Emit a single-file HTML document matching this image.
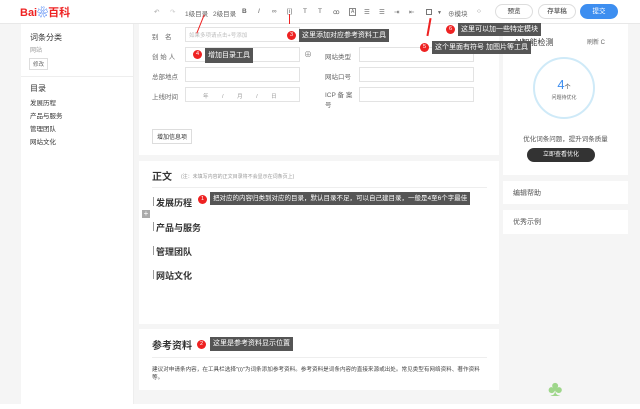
<!DOCTYPE html>
<html><head><meta charset="utf-8"><style>
*{margin:0;padding:0;box-sizing:border-box}
body{width:640px;height:409px;overflow:hidden;background:#f5f5f5;font-family:"Liberation Sans","Noto Sans CJK SC",sans-serif;color:#333;position:relative;font-size:7px}
.a{position:absolute}
.top{left:0;top:0;width:640px;height:24px;background:#fff;border-bottom:1px solid #e8e8e8}
.card{background:#fff;position:absolute}
.tip{position:absolute;background:#555;color:#fff;font-size:7px;height:13px;line-height:13px;padding:0 3px;white-space:nowrap}
.num{position:absolute;width:9px;height:9px;border-radius:50%;background:#e22;color:#fff;font-size:5.5px;text-align:center;line-height:9px}
.lbl{position:absolute;font-size:6.5px;color:#666}
.inp{position:absolute;border:1px solid #e3e3e3;height:15px;background:#fff}
.h{position:absolute;font-size:9px;font-weight:bold;color:#333}
.bar{position:absolute;width:1px;height:9px;background:#999}
.tb{position:absolute;top:8px;font-size:6.5px;color:#666}
.btn{position:absolute;top:4px;height:15px;border:1px solid #ddd;border-radius:8px;font-size:6.5px;text-align:center;line-height:13px;color:#333;background:#fff}
</style></head><body>
<div class="a top"></div>
<div class="a" style="left:20px;top:4px;font-size:11px;font-weight:bold;color:#e22">Bai<span style="color:#2468f2">&#10048;</span>百科</div>
<div class="tb" style="left:154px;color:#aaa">↶</div><div class="tb" style="left:170px;color:#ccc">↷</div>
<div class="tb" style="left:185px">1级目录</div><div class="tb" style="left:213px">2级目录</div>
<div class="tb" style="left:242px;font-weight:bold">B</div><div class="tb" style="left:258px;font-style:italic">I</div>
<div class="tb" style="left:272px">∞</div><div class="tb" style="left:287px">[i]</div>
<div class="tb" style="left:303px">T</div><div class="tb" style="left:318px">T</div><div class="tb" style="left:333px">ꝏ</div>
<div class="tb" style="left:349px;border:1px solid #888;font-size:5px;padding:0 1px">A</div>
<div class="tb" style="left:364px">☰</div><div class="tb" style="left:379px">☰</div><div class="tb" style="left:394px">⇥</div><div class="tb" style="left:409px">⇤</div>
<div class="tb" style="left:426px;border:1px solid #777;width:6px;height:6px;top:9px"></div>
<div class="tb" style="left:437px;font-size:5px;top:10px">▼</div>
<div class="tb" style="left:448px">⊕模块</div><div class="tb" style="left:477px">○</div>
<div class="btn" style="left:495px;width:38px">预览</div>
<div class="btn" style="left:538px;width:38px">存草稿</div>
<div class="btn" style="left:580px;width:38px;background:#3d8ef0;border-color:#3d8ef0;color:#fff">提交</div>

<div class="card" style="left:21px;top:24px;width:113px;height:381px;border-right:1px solid #eee"></div>
<div class="a" style="left:30px;top:32px;font-size:8px">词条分类</div>
<div class="a" style="left:30px;top:45px;font-size:6px;color:#999">网站</div>
<div class="a" style="left:29px;top:58px;border:1px solid #ddd;font-size:5.5px;padding:1px 3px;color:#666">修改</div>
<div class="a" style="left:21px;top:76px;width:113px;height:1px;background:#eee"></div>
<div class="a" style="left:30px;top:83px;font-size:8px">目录</div>
<div class="a" style="left:30px;top:97px;font-size:6.5px;line-height:13px">发展历程<br>产品与服务<br>管理团队<br>网站文化</div>

<div class="card" style="left:139px;top:24px;width:360px;height:131px"></div>
<div class="lbl" style="left:152px;top:31px">别　名</div><div class="inp" style="left:185px;top:27px;width:115px"></div>
<div class="a" style="left:189px;top:31px;font-size:5.5px;color:#bbb">如果多项请点击+号添加</div>
<div class="lbl" style="left:152px;top:51px">创 始 人</div><div class="inp" style="left:185px;top:47px;width:115px"></div>
<div class="a" style="left:304px;top:49px;font-size:8px;color:#888">⊕</div>
<div class="lbl" style="left:152px;top:71px">总部地点</div><div class="inp" style="left:185px;top:67px;width:115px"></div>
<div class="lbl" style="left:152px;top:91px">上线时间</div><div class="inp" style="left:185px;top:87px;width:115px"></div>
<div class="a" style="left:203px;top:92px;font-size:5.5px;color:#999;word-spacing:12px">年 / 月 / 日</div>
<div class="lbl" style="left:325px;top:51px">网站类型</div><div class="inp" style="left:359px;top:47px;width:115px"></div>
<div class="lbl" style="left:325px;top:71px">网站口号</div><div class="inp" style="left:359px;top:67px;width:115px"></div>
<div class="lbl" style="left:325px;top:91px;line-height:10px">ICP 备 案<br>号</div><div class="inp" style="left:359px;top:87px;width:115px"></div>
<div class="a" style="left:152px;top:129px;border:1px solid #ddd;font-size:6px;padding:2px 4px">增加信息项</div>

<div class="card" style="left:139px;top:161px;width:360px;height:163px"></div>
<div class="a" style="left:152px;top:168px;font-size:10px;font-weight:bold">正文</div>
<div class="a" style="left:181px;top:173px;font-size:5px;color:#999">(注：未填写内容的正文目录将不会显示在词条页上)</div>
<div class="a" style="left:152px;top:187px;width:335px;height:1px;background:#eee"></div>
<div class="bar" style="left:153px;top:197px"></div><div class="h" style="left:156px;top:196px">发展历程</div>
<div class="a" style="left:142px;top:210px;width:8px;height:8px;background:#aaa;color:#fff;font-size:8px;line-height:8px;text-align:center">+</div>
<div class="bar" style="left:153px;top:222px"></div><div class="h" style="left:156px;top:221px">产品与服务</div>
<div class="bar" style="left:153px;top:246px"></div><div class="h" style="left:156px;top:245px">管理团队</div>
<div class="bar" style="left:153px;top:270px"></div><div class="h" style="left:156px;top:269px">网站文化</div>

<div class="card" style="left:139px;top:329px;width:360px;height:61px"></div>
<div class="a" style="left:152px;top:337px;font-size:10px;font-weight:bold">参考资料</div>
<div class="a" style="left:152px;top:357px;width:335px;height:1px;background:#eee"></div>
<div class="a" style="left:152px;top:366px;font-size:5.6px;color:#444;width:330px;line-height:8px">建议对申请条内容，在工具栏选择"(i)"为词条添加参考资料。参考资料是词条内容的直接来源或出处。常见类型有网络资料、著作资料等。</div>

<div class="card" style="left:503px;top:24px;width:125px;height:151px"></div>
<div class="a" style="left:514px;top:37px;font-size:8px">AI智能检测</div>
<div class="a" style="left:587px;top:37px;font-size:6px;color:#666">刷新 C</div>
<div class="a" style="left:533px;top:57px;width:62px;height:62px;border:2px solid #cfeaf8;border-radius:50%;text-align:center"></div>
<div class="a" style="left:530px;top:77px;width:68px;text-align:center;font-size:13px;color:#3d8ef0">4<span style="font-size:6px;color:#333">个</span></div>
<div class="a" style="left:530px;top:94px;width:68px;text-align:center;font-size:5px;color:#666">问题待优化</div>
<div class="a" style="left:503px;top:133px;width:125px;text-align:center;font-size:6.5px;color:#555">优化词条问题，提升词条质量</div>
<div class="a" style="left:527px;top:148px;width:68px;height:14px;border-radius:7px;background:#333;color:#fff;font-size:6px;text-align:center;line-height:14px">立即查看优化</div>
<div class="card" style="left:503px;top:181px;width:125px;height:23px"></div>
<div class="a" style="left:513px;top:188px;font-size:7px;color:#555">编辑帮助</div>
<div class="card" style="left:503px;top:210px;width:125px;height:24px"></div>
<div class="a" style="left:513px;top:217px;font-size:7px;color:#555">优秀示例</div>
<div class="a" style="left:0;top:404px;width:640px;height:5px;background:#fff"></div>
<div class="a" style="left:548px;top:376px;font-size:22px;color:#9ed68a">&#9827;</div>

<div class="a" style="left:200px;top:14px;width:1px;height:20px;background:#e22;transform:rotate(22deg)"></div>
<div class="a" style="left:289px;top:14px;width:1px;height:10px;background:#e22"></div>
<div class="a" style="left:428px;top:18px;width:1.5px;height:18px;background:#e22;transform:rotate(10deg)"></div>
<div class="num" style="left:287px;top:31px">3</div><div class="tip" style="left:299px;top:29px">这里添加对应参考资料工具</div>
<div class="num" style="left:193px;top:50px">4</div><div class="tip" style="left:205px;top:48px;height:15px;line-height:15px">增加目录工具</div>
<div class="num" style="left:446px;top:25px">6</div><div class="tip" style="left:458px;top:23px">这里可以加一些特定模块</div>
<div class="num" style="left:420px;top:43px">5</div><div class="tip" style="left:432px;top:41px">这个里面有符号 加图片等工具</div>
<div class="num" style="left:198px;top:195px">1</div><div class="tip" style="left:210px;top:192px;font-size:6.5px">把对应的内容归类到对应的目录，默认目录不足，可以自己建目录，一般是4至6个字最佳</div>
<div class="num" style="left:197px;top:340px">2</div><div class="tip" style="left:210px;top:337px;height:14px">这里是参考资料显示位置</div>
</body></html>
